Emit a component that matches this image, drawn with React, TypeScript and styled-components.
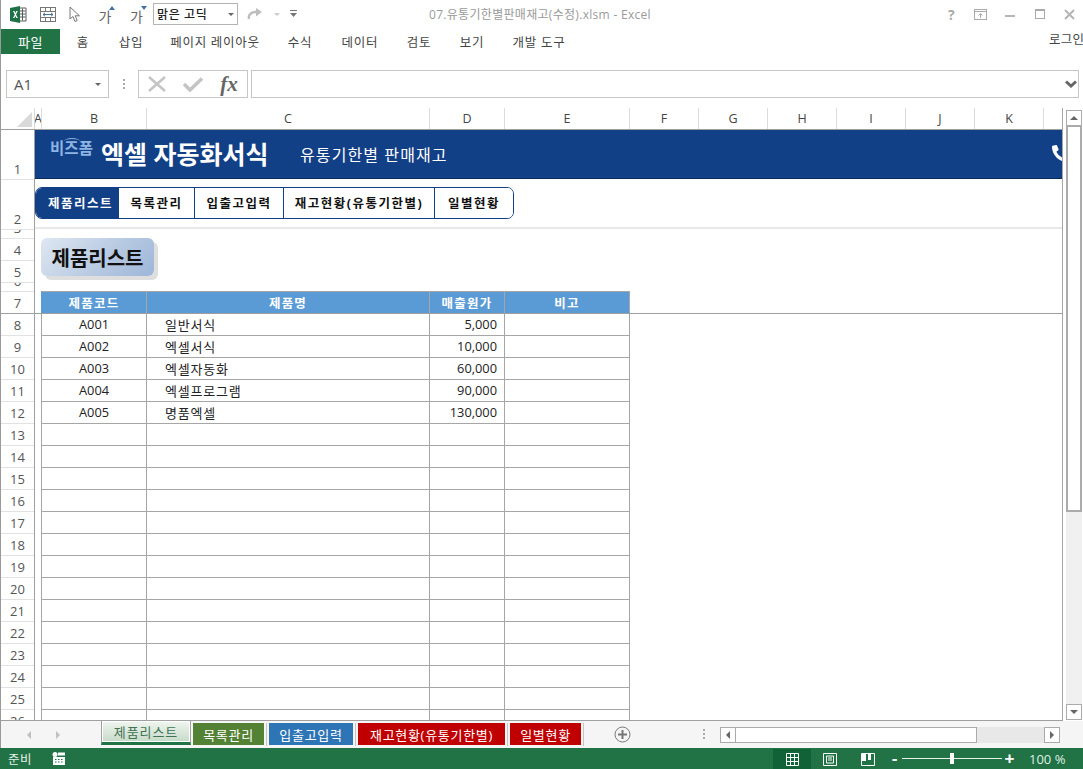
import React from "react";
import styled, { createGlobalStyle } from "styled-components";
import { FaPhoneAlt } from "react-icons/fa";

const Global = createGlobalStyle`
  html, body { margin: 0; padding: 0; background: #fff; overflow: hidden; }
  * { box-sizing: border-box; }
  body { font-family: "Open Sans", "Noto Sans CJK KR", sans-serif; color: #333; }
`;

const Page = styled.div`width: 1083px; height: 769px; display: flex; flex-direction: column; overflow: hidden; background: #fff;`;
const Chrome = styled.div`height: 748px; display: flex; flex-direction: column; border-left: 1px solid #9a9a9a;`;

/* title bar */
const TitleBar = styled.div`height: 28px; display: flex; align-items: center; position: relative;`;
const QatSlot = styled.div<{ $w: number }>`width: ${(p) => p.$w}px; height: 28px; display: flex; align-items: center; justify-content: center; flex: none;`;
const QatLetter = styled.span`position: relative; font-size: 14px; font-weight: 400; color: #666; margin-top: 4px;
  &::after { content: ""; position: absolute; right: -4px; border-left: 3.5px solid transparent; border-right: 3.5px solid transparent; }`;
const QatUp = styled(QatLetter)`&::after { top: 0; border-bottom: 4px solid #41719c; }`;
const QatDown = styled(QatLetter)`&::after { top: 0; border-top: 4px solid #41719c; }`;
const FontCombo = styled.div`width: 85px; height: 22px; flex: none; border: 1px solid #b4b4b4; display: flex; align-items: center; justify-content: space-between; padding: 0 3px 0 3px; font-size: 12px; font-weight: 500; letter-spacing: 0.6px; color: #222;`;
const SmallCaret = styled.i<{ $c?: string }>`display: block; width: 0; height: 0; border-left: 3px solid transparent; border-right: 3px solid transparent; border-top: 3px solid ${(p) => p.$c || "#666"};`;
const WindowTitle = styled.div`margin-left: 125px; width: 300px; font-size: 12px; color: #9a9a9a; white-space: nowrap; letter-spacing: 0.3px;`;
const WinButtons = styled.div`margin-left: auto; margin-right: -1px; display: flex; align-items: center;`;
const WinButton = styled.div`width: 29.5px; height: 28px; display: flex; align-items: center; justify-content: center; color: #aaa; font-size: 14px; font-weight: 700;`;

/* ribbon */
const Ribbon = styled.div`height: 26px; display: flex; align-items: center; position: relative;`;
const FileTab = styled.div`width: 59px; height: 25px; background: #217346; color: #fff; font-size: 13px; display: flex; align-items: center; justify-content: center; letter-spacing: 0.6px;`;
const RibbonTab = styled.div<{ $w: number }>`width: ${(p) => p.$w}px; text-align: center; font-size: 12.5px; color: #444; letter-spacing: 0.75px; white-space: nowrap; flex: none;`;
const Login = styled.div`margin-left: auto; font-size: 12.5px; color: #444; white-space: nowrap; width: 34px; overflow: hidden; margin-top: -6px; letter-spacing: 0.3px;`;

/* formula bar */
const FormulaBar = styled.div`height: 28px; margin-top: 16px; display: flex; align-items: stretch; padding-left: 5px; padding-right: 4px;`;
const NameBox = styled.div`width: 103px; border: 1px solid #c6c6c6; display: flex; align-items: center; justify-content: space-between; padding: 0 7px 0 7px; font-size: 15px; color: #555;`;
const DotsV = styled.div`width: 29px; display: flex; flex-direction: column; align-items: center; justify-content: center; gap: 2px;`;
const Dot = styled.i`display: block; width: 2px; height: 2px; background: #aaa;`;
const FxBox = styled.div`width: 110px; border: 1px solid #c6c6c6; display: flex; align-items: center;`;
const FxSlot = styled.div`width: 36px; display: flex; align-items: center; justify-content: center;`;
const FxText = styled.span`font-family: "Liberation Serif", serif; font-style: italic; font-weight: 700; font-size: 21px; color: #666; line-height: 1;`;
const FormulaInput = styled.div`flex: 1; margin-left: 3px; border: 1px solid #c6c6c6; display: flex; align-items: center; justify-content: flex-end; padding-right: 1px;`;

/* main grid */
const Main = styled.div`height: 613px; margin-top: 10px; display: flex;`;
const GridPane = styled.div`width: 1062px; flex: none; display: flex; flex-direction: column; border-right: 1px solid #a6a6a6; border-bottom: 1px solid #a0a0a0; height: 613px;`;
const ColHeaders = styled.div`height: 22px; display: flex; flex: none; border-bottom: 1px solid #9f9f9f;`;
const Corner = styled.div`width: 34px; flex: none; display: flex; align-items: flex-end; justify-content: flex-end; padding: 0 2px 2px 0; border-right: 1px solid #d9d9d9;`;
const ColHead = styled.div<{ $w?: number }>`${(p) => (p.$w ? `width: ${p.$w}px; flex: none;` : "flex: 1;")} border-right: 1px solid #dcdcdc; display: flex; align-items: center; justify-content: center; font-size: 12.5px; color: #444; overflow: hidden;`;
const LastCol = styled.div`flex: 1;`;
const SheetArea = styled.div`flex: 1; display: flex; min-height: 0; overflow: hidden;`;
const RowHeads = styled.div`width: 34px; flex: none; border-right: 1px solid #9f9f9f; overflow: hidden;`;
const RowHead = styled.div<{ $h: number; $strong?: boolean }>`height: ${(p) => p.$h}px; border-bottom: 1px solid ${(p) => (p.$strong ? "#9f9f9f" : "#e2e2e2")}; display: flex; align-items: flex-end; justify-content: center; font-size: 13px; line-height: 20px; color: #555; overflow: hidden;`;
const SheetBody = styled.div`flex: 1; min-width: 0; overflow: hidden; display: flex; flex-direction: column;`;

const Banner = styled.div`height: 49px; flex: none; background: #124087; border-bottom: 1px solid #0b2a5c; display: flex; align-items: center; padding-left: 15px; overflow: hidden;`;
const LogoText = styled.div`position: relative; width: 51px; font-size: 15.5px; font-weight: 700; color: #8db4e2; letter-spacing: 0.1px; margin-top: -13px; flex: none;
  &::before { content: ""; position: absolute; left: 14px; top: 2px; width: 16px; height: 5px; border-top: 1px solid #8db4e2; border-radius: 50%; }`;
const BannerTitle = styled.div`font-size: 25px; font-weight: 700; color: #fff; white-space: nowrap; width: 199px; flex: none; margin-top: -3px;`;
const BannerSub = styled.div`font-size: 16px; color: #fff; white-space: nowrap; letter-spacing: 1.1px; flex: none;`;
const PhoneWrap = styled.div`margin-left: auto; margin-right: -7px; color: #fff; display: flex; flex: none; margin-top: -2px;`;

const NavRow = styled.div`height: 50px; flex: none; padding-top: 8px; border-bottom: 2px solid #e9e9e9;`;
const NavBar = styled.div`width: 479px; height: 32px; display: flex; border: 1px solid #124087; border-radius: 7px; overflow: hidden;`;
const NavItem = styled.div<{ $w: number; $active?: boolean }>`width: ${(p) => p.$w}px; flex: none; display: flex; align-items: center; justify-content: center; padding: 0 0 1px ${(p) => (p.$active ? 7 : 0)}px; font-size: 12.5px; font-weight: 700; letter-spacing: 1.5px; white-space: nowrap; background: ${(p) => (p.$active ? "#124087" : "#fff")}; color: ${(p) => (p.$active ? "#fff" : "#111")}; border-right: 1px solid #124087; &:last-child { border-right: 0; flex: 1; }`;

const TitleRow = styled.div`height: 62px; flex: none; padding: 9px 0 0 6px;`;
const SheetTitle = styled.div`width: 113px; height: 38px; border-radius: 6px; background: linear-gradient(135deg, #dfe7f2 0%, #bccde4 50%, #9db6d8 100%); box-shadow: 4px 4px 0 #dedede; display: flex; align-items: center; justify-content: center; font-size: 20px; font-weight: 700; color: #111;`;

const TableRow = styled.div<{ $head?: boolean }>`height: ${(p) => (p.$head ? 23 : 22)}px; flex: none; display: flex; ${(p) => (p.$head ? "border-bottom: 1px solid #9f9f9f;" : "")}`;
const Gutter = styled.div`width: 6px; flex: none;`;
const Cell = styled.div<{ $w: number; $align?: string; $first?: boolean }>`width: ${(p) => p.$w}px; flex: none; height: 22px; display: flex; align-items: center; padding: 0 7px 1px 18px; font-size: 12.8px; color: #222; white-space: nowrap; justify-content: ${(p) => p.$align || "flex-start"}; border-right: 1px solid #a6a6a6; border-bottom: 1px solid #a6a6a6; ${(p) => (p.$first ? "border-left: 1px solid #a6a6a6; padding: 0 0 1px;" : "")}`;
const NameCell = styled(Cell)`font-size: 13px; letter-spacing: 0.8px;`;
const HeadCell = styled.div<{ $w: number; $first?: boolean }>`width: ${(p) => p.$w}px; flex: none; background: #5b9bd5; color: #fff; font-size: 12.5px; font-weight: 700; letter-spacing: 1.2px; padding-bottom: 1px; display: flex; align-items: center; justify-content: center; border-top: 1px solid #a6a6a6; border-right: 1px solid #a6a6a6; ${(p) => (p.$first ? "border-left: 1px solid #5b9bd5;" : "")}`;

/* vertical scrollbar */
const VScroll = styled.div`width: 16px; margin-left: 3px; flex: none; height: 612px; padding-top: 2px; display: flex; flex-direction: column; background: #fff;`;
const ScrollBtn = styled.div`width: 16px; height: 16px; flex: none; border: 1px solid #ababab; background: #fff; display: flex; align-items: center; justify-content: center;`;
const VThumb = styled.div`height: 386px; flex: none; border: 2px solid #ababab; border-top-width: 1px; background: #fff;`;
const VTrack = styled.div`flex: 1; background: #f0f0f0;`;
const ArrowUp = styled.i`display: block; width: 0; height: 0; border-left: 4px solid transparent; border-right: 4px solid transparent; border-bottom: 4px solid #666;`;
const ArrowDown = styled.i`display: block; width: 0; height: 0; border-left: 4px solid transparent; border-right: 4px solid transparent; border-top: 4px solid #666;`;
const ArrowLeft = styled.i<{ $c?: string }>`display: block; width: 0; height: 0; border-top: 4px solid transparent; border-bottom: 4px solid transparent; border-right: 4px solid ${(p) => p.$c || "#666"};`;
const ArrowRight = styled.i<{ $c?: string }>`display: block; width: 0; height: 0; border-top: 4px solid transparent; border-bottom: 4px solid transparent; border-left: 4px solid ${(p) => p.$c || "#666"};`;

/* sheet tabs */
const TabBar = styled.div`height: 27px; flex: none; background: #f5f5f5; display: flex; align-items: flex-start;`;
const TabNav = styled.div`width: 100px; flex: none; height: 27px; display: flex; align-items: center; gap: 25px; padding-left: 26px;`;
const ActiveTab = styled.div`width: 90px; height: 25px; margin-top: -1px; flex: none; border: 1px solid #a0a0a0; border-bottom: 3px solid #217346; background: #fff; padding: 1px; display: flex;`;
const ActiveFace = styled.div`flex: 1; background: linear-gradient(#eef4ee, #c8dbc9); color: #3f7353; font-size: 13px; letter-spacing: 0.9px; display: flex; align-items: center; justify-content: center; white-space: nowrap;`;
const TabSlot = styled.div`margin-left: 2px; margin-top: 2px; height: 23px; padding-right: 2px; border-right: 1px solid #c4c4c4; flex: none;`;
const ColorTab = styled.div<{ $w: number; $bg: string }>`width: ${(p) => p.$w}px; height: 22px; background: ${(p) => p.$bg}; color: #fff; font-size: 13px; letter-spacing: 0.7px; display: flex; align-items: center; justify-content: center; white-space: nowrap;`;
const AddSheet = styled.div`margin-left: 30px; margin-top: 5px; flex: none; display: flex;`;
const DotsBar = styled.div`margin-left: 72px; margin-top: 8px; width: 17px; flex: none; display: flex; flex-direction: column; gap: 2px;`;
const HScroll = styled.div`width: 340px; height: 16px; margin-top: 6px; flex: none; display: flex; background: #e8e8e8;`;
const HThumb = styled.div`width: 241px; flex: none; background: #fff; border: 1px solid #ababab; border-left: 0;`;
const HTrack = styled.div`flex: 1;`;

/* status bar */
const StatusBar = styled.div`height: 21px; flex: none; background: #217346; color: #fff; display: flex; align-items: center; padding-left: 8px;`;
const StatusText = styled.div`font-size: 12.5px; color: #e6f0ea; width: 44px; flex: none; letter-spacing: 0.4px;`;
const ViewGroup = styled.div`margin-left: auto; display: flex; align-items: center; height: 21px;`;
const ViewBtn = styled.div<{ $on?: boolean }>`width: 38px; height: 20px; margin-top: 1px; display: flex; align-items: center; justify-content: center; background: ${(p) => (p.$on ? "#0f6337" : "transparent")};`;
const ZoomGlyph = styled.div`width: 15px; flex: none; font-size: 17px; font-weight: 700; line-height: 18px; text-align: center; color: #fff; font-family: "Liberation Sans", sans-serif;`;
const Slider = styled.div`position: relative; width: 100px; height: 1px; background: #e8f0ea; flex: none;
  &::after { content: ""; position: absolute; left: 48px; top: -5px; width: 4px; height: 11px; background: #fff; }`;
const ZoomPct = styled.div`width: 66px; padding-left: 12px; font-size: 13px; color: #dfeee5; white-space: nowrap; flex: none;`;

const rowHeights: [string, number][] = [["1", 50], ["2", 50], ["3", 9], ["4", 22], ["5", 22], ["6", 9], ["7", 22]];
for (let i = 8; i <= 26; i++) rowHeights.push([String(i), 22]);

const cols: [string, number][] = [["A", 7], ["B", 105], ["C", 283], ["D", 75], ["E", 125], ["F", 69], ["G", 69], ["H", 69], ["I", 69], ["J", 69], ["K", 69]];

const data: [string, string, string][] = [
  ["A001", "일반서식", "5,000"],
  ["A002", "엑셀서식", "10,000"],
  ["A003", "엑셀자동화", "60,000"],
  ["A004", "엑셀프로그램", "90,000"],
  ["A005", "명품엑셀", "130,000"],
];
const blanks = Array.from({ length: 14 }, (_, i) => i);

const ExcelIcon = () => (
  <svg width="17" height="17" viewBox="0 0 17 17">
    <path d="M9 2h7v13H9z" fill="#fff" stroke="#5a5a5a" />
    <path d="M9.5 5h6M9.5 8h6M9.5 11h6M12.5 2.5v12" stroke="#5a5a5a" strokeWidth="1" />
    <path d="M0 2l10-2v17L0 15z" fill="#1e7145" />
    <path d="M3 5l1.4 0 1 2 1-2h1.4L6 8.5 7.8 12H6.4l-1-2.1-1 2.1H3l1.8-3.5z" fill="#fff" />
  </svg>
);
const FormIcon = () => (
  <svg width="16" height="15" viewBox="0 0 16 15" fill="none" stroke="#777">
    <rect x="0.5" y="0.5" width="15" height="14" />
    <path d="M0.5 4.5h15M0.5 10.5h15M5.5 0.5v4M10.5 0.5v4M5.5 10.5v4M10.5 10.5v4" />
    <path d="M3 7.5h10" stroke="#41719c" />
    <path d="M5 5.8L3 7.5l2 1.7M11 5.8l2 1.7-2 1.7" stroke="#41719c" />
  </svg>
);
const CursorIcon = () => (
  <svg width="12" height="17" viewBox="0 0 12 17" fill="#fff" stroke="#777">
    <path d="M1 1v12l3-2.5 2 5 2.2-1-2-4.7H10.500z" />
  </svg>
);
const RedoIcon = () => (
  <svg width="16" height="13" viewBox="0 0 16 13" fill="none">
    <path d="M2 11C1 6 5 3.500 10 4" stroke="#bdbdbd" strokeWidth="2.4" />
    <path d="M9 0l6 4-6 4.500z" fill="#bdbdbd" />
  </svg>
);
const CustomizeIcon = () => (
  <svg width="7" height="8" viewBox="0 0 7 8">
    <path d="M0 0.500h7" stroke="#777" />
    <path d="M0 3l3.500 4L7 3z" fill="#777" />
  </svg>
);
const RibbonDisplay = () => (
  <svg width="13" height="11" viewBox="0 0 13 11" fill="none" stroke="#aaa">
    <rect x="0.500" y="0.500" width="12" height="10" />
    <path d="M0.500 2.500h12M6.500 9V4.500M4.500 6.500l2-2 2 2" />
  </svg>
);
const Minimize = () => <svg width="10" height="6" viewBox="0 0 10 6"><rect width="10" height="2" y="4" fill="#b5b5b5" /></svg>;
const Maximize = () => (
  <svg width="10" height="10" fill="none" stroke="#aaa"><rect x="0.500" y="0.500" width="9" height="9" /><path d="M0 1.500h10" /></svg>
);
const CloseX = () => (
  <svg width="11" height="11" stroke="#b5b5b5" strokeWidth="2"><path d="M1 1l9 9M10 1l-9 9" /></svg>
);
const Chevron = () => (
  <svg width="12" height="8" viewBox="0 0 12 8" fill="none" stroke="#666" strokeWidth="3"><path d="M1 1.500l5 4.500 5-4.500" /></svg>
);
const CrossIcon = () => (
  <svg width="18" height="16" stroke="#c4c4c4" strokeWidth="2.500"><path d="M1 1l16 14M17 1L1 15" /></svg>
);
const CheckIcon = () => (
  <svg width="20" height="15" fill="none" stroke="#c4c4c4" strokeWidth="3.500"><path d="M1 7l6 6L19 1.500" /></svg>
);
const CornerTriangle = () => (
  <svg width="15" height="15"><path d="M15 0v15H0z" fill="#d9d9d9" /></svg>
);
const PlusCircle = () => (
  <svg width="17" height="17" viewBox="0 0 17 17" fill="none" stroke="#777">
    <circle cx="8.500" cy="8.500" r="7.500" />
    <path d="M8.500 4v9M4 8.500h9" strokeWidth="2" />
  </svg>
);
const CalcIcon = () => (
  <svg width="13" height="13" viewBox="0 0 13 13" fill="#fff">
    <circle cx="3" cy="2.500" r="2.500" />
    <rect x="6" y="0.500" width="7" height="3" />
    <path d="M1 5h12v8H1z" />
    <path d="M3 7h1.500v1H3zM6 7h1.500v1H6zM9 7h1.500v1H9zM3 9.500h1.500v1H3zM6 9.500h1.500v1H6zM9 9.500h1.500v1H9z" fill="#217346" />
  </svg>
);
const GridIcon = () => (
  <svg width="13" height="13" viewBox="0 0 13 13" fill="none" stroke="#fff"><path d="M0.500 0.500h12v12h-12zM0.500 4.500h12M0.500 8.500h12M4.500 0.500v12M8.500 0.500v12" /></svg>
);
const PageIcon = () => (
  <svg width="14" height="13" viewBox="0 0 14 13" fill="none" stroke="#fff"><path d="M0.500 0.500h13v12h-13zM3.500 3h7v7h-7zM5 5h4M5 7h4" /></svg>
);
const BreakIcon = () => (
  <svg width="14" height="13" viewBox="0 0 14 13" fill="none" stroke="#fff"><path d="M0.500 0.500h13v12h-13z" /><path d="M1 1h4v7H1zM7 1h3v6H7z" fill="#fff" stroke="none" /></svg>
);

export default function App() {
  return (
    <Page>
      <Global />
      <Chrome>
        <TitleBar>
          <QatSlot $w={35}><ExcelIcon /></QatSlot>
          <QatSlot $w={24}><FormIcon /></QatSlot>
          <QatSlot $w={30}><CursorIcon /></QatSlot>
          <QatSlot $w={30}><QatUp>가</QatUp></QatSlot>
          <QatSlot $w={33}><QatDown>가</QatDown></QatSlot>
          <FontCombo>맑은 고딕<SmallCaret /></FontCombo>
          <QatSlot $w={34}><RedoIcon /></QatSlot>
          <QatSlot $w={10}><SmallCaret $c="#ccc" /></QatSlot>
          <QatSlot $w={22}><CustomizeIcon /></QatSlot>
          <WindowTitle>07.유통기한별판매재고(수정).xlsm - Excel</WindowTitle>
          <WinButtons>
            <WinButton>?</WinButton>
            <WinButton><RibbonDisplay /></WinButton>
            <WinButton><Minimize /></WinButton>
            <WinButton><Maximize /></WinButton>
            <WinButton><CloseX /></WinButton>
          </WinButtons>
        </TitleBar>
        <Ribbon>
          <FileTab>파일</FileTab>
          <RibbonTab $w={46}>홈</RibbonTab>
          <RibbonTab $w={50}>삽입</RibbonTab>
          <RibbonTab $w={118}>페이지 레이아웃</RibbonTab>
          <RibbonTab $w={52}>수식</RibbonTab>
          <RibbonTab $w={68}>데이터</RibbonTab>
          <RibbonTab $w={50}>검토</RibbonTab>
          <RibbonTab $w={56}>보기</RibbonTab>
          <RibbonTab $w={78}>개발 도구</RibbonTab>
          <Login>로그인</Login>
        </Ribbon>
        <FormulaBar>
          <NameBox>A1<SmallCaret /></NameBox>
          <DotsV><Dot /><Dot /><Dot /></DotsV>
          <FxBox>
            <FxSlot><CrossIcon /></FxSlot>
            <FxSlot><CheckIcon /></FxSlot>
            <FxSlot><FxText>fx</FxText></FxSlot>
          </FxBox>
          <FormulaInput><Chevron /></FormulaInput>
        </FormulaBar>
        <Main>
          <GridPane>
            <ColHeaders>
              <Corner><CornerTriangle /></Corner>
              {cols.map(([c, w]) => <ColHead key={c} $w={w}>{c}</ColHead>)}
              <LastCol />
            </ColHeaders>
            <SheetArea>
              <RowHeads>
                {rowHeights.map(([n, h]) => <RowHead key={n} $h={h} $strong={n === "7"}>{n}</RowHead>)}
              </RowHeads>
              <SheetBody>
                <Banner>
                  <LogoText>비즈폼</LogoText>
                  <BannerTitle>엑셀 자동화서식</BannerTitle>
                  <BannerSub>유통기한별 판매재고</BannerSub>
                  <PhoneWrap><FaPhoneAlt size={17} /></PhoneWrap>
                </Banner>
                <NavRow>
                  <NavBar>
                    <NavItem $w={83} $active>제품리스트</NavItem>
                    <NavItem $w={76}>목록관리</NavItem>
                    <NavItem $w={89}>입출고입력</NavItem>
                    <NavItem $w={151}>재고현황(유통기한별)</NavItem>
                    <NavItem $w={79}>일별현황</NavItem>
                  </NavBar>
                </NavRow>
                <TitleRow>
                  <SheetTitle>제품리스트</SheetTitle>
                </TitleRow>
                <TableRow $head>
                  <Gutter />
                  <HeadCell $w={106} $first>제품코드</HeadCell>
                  <HeadCell $w={283}>제품명</HeadCell>
                  <HeadCell $w={75}>매출원가</HeadCell>
                  <HeadCell $w={125}>비고</HeadCell>
                </TableRow>
                {data.map(([code, name, cost]) => (
                  <TableRow key={code}>
                    <Gutter />
                    <Cell $w={106} $first $align="center">{code}</Cell>
                    <NameCell $w={283}>{name}</NameCell>
                    <Cell $w={75} $align="flex-end">{cost}</Cell>
                    <Cell $w={125} />
                  </TableRow>
                ))}
                {blanks.map((i) => (
                  <TableRow key={i}>
                    <Gutter />
                    <Cell $w={106} $first />
                    <Cell $w={283} />
                    <Cell $w={75} />
                    <Cell $w={125} />
                  </TableRow>
                ))}
              </SheetBody>
            </SheetArea>
          </GridPane>
          <VScroll>
            <ScrollBtn><ArrowUp /></ScrollBtn>
            <VThumb />
            <VTrack />
            <ScrollBtn><ArrowDown /></ScrollBtn>
          </VScroll>
        </Main>
        <TabBar>
          <TabNav><ArrowLeft $c="#c0c0c0" /><ArrowRight $c="#c0c0c0" /></TabNav>
          <ActiveTab><ActiveFace>제품리스트</ActiveFace></ActiveTab>
          <TabSlot><ColorTab $w={71} $bg="#548235">목록관리</ColorTab></TabSlot>
          <TabSlot><ColorTab $w={84} $bg="#2e75b6">입출고입력</ColorTab></TabSlot>
          <TabSlot><ColorTab $w={147} $bg="#c00000">재고현황(유통기한별)</ColorTab></TabSlot>
          <TabSlot><ColorTab $w={71} $bg="#c00000">일별현황</ColorTab></TabSlot>
          <AddSheet><PlusCircle /></AddSheet>
          <DotsBar><Dot /><Dot /><Dot /></DotsBar>
          <HScroll>
            <ScrollBtn><ArrowLeft /></ScrollBtn>
            <HThumb />
            <HTrack />
            <ScrollBtn><ArrowRight /></ScrollBtn>
          </HScroll>
        </TabBar>
      </Chrome>
      <StatusBar>
        <StatusText>준비</StatusText>
        <CalcIcon />
        <ViewGroup>
          <ViewBtn $on><GridIcon /></ViewBtn>
          <ViewBtn><PageIcon /></ViewBtn>
          <ViewBtn><BreakIcon /></ViewBtn>
          <ZoomGlyph>-</ZoomGlyph>
          <Slider />
          <ZoomGlyph>+</ZoomGlyph>
          <ZoomPct>100 %</ZoomPct>
        </ViewGroup>
      </StatusBar>
    </Page>
  );
}
